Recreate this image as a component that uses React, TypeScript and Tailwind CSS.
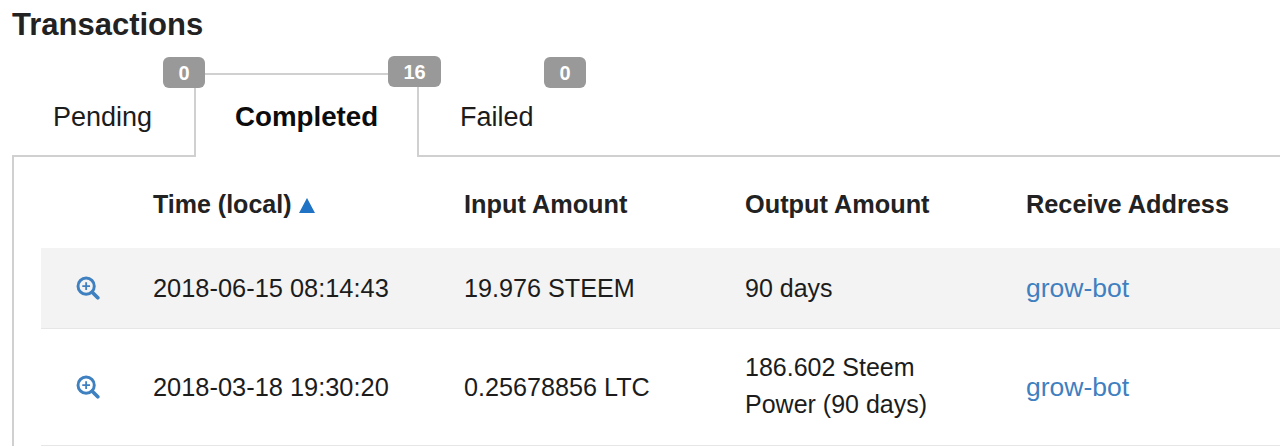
const font = "[font-family:'Liberation_Sans',Arial,sans-serif]";

function Badge({ children, className }: { children: React.ReactNode; className: string }) {
  return (
    <span className={`absolute z-10 flex h-[31px] items-center justify-center rounded-[6px] bg-[#999999] text-[20px] font-bold text-white ${className}`}>
      {children}
    </span>
  );
}

function Zoom() {
  return (
    <svg width="24" height="24" viewBox="0 0 26 26" fill="none" stroke="#3f80c0" className="block">
      <circle cx="11" cy="11" r="8.8" strokeWidth="3.2" />
      <path d="M17.6 17.6 L23.6 23.6" strokeWidth="4" strokeLinecap="round" />
      <path d="M11 6.8 V15.2 M6.8 11 H15.2" strokeWidth="2" />
    </svg>
  );
}

const cols = "grid grid-cols-[112px_311px_281px_281px_1fr] items-center";

function Row({ time, input, output, shaded, tall }: { time: string; input: string; output: React.ReactNode; shaded?: boolean; tall?: boolean }) {
  return (
    <div className={`${cols} ${shaded ? "h-[81px] bg-[#f3f3f3]" : ""} ${tall ? "h-[117px]" : ""} border-b border-[#e6e6e6]`}>
      <div className="pl-[35px]"><Zoom /></div>
      <div className="pt-[1px] text-[25.4px]">{time}</div>
      <div className="pt-[1px]">{input}</div>
      <div className={`text-[25px] leading-[37px] ${tall ? "pb-[2px]" : ""}`}>{output}</div>
      <div className="pt-[1px] text-[26.5px] text-[#3f80c0]">grow-bot</div>
    </div>
  );
}

export default function App() {
  return (
    <div className={`${font} h-[447px] w-[1280px] overflow-hidden bg-white text-[25.2px] text-[#1c1c1c]`}>
      <h1 className="pl-[12px] pt-[8px] text-[31px] font-bold leading-[33px] text-[#222222]">Transactions</h1>
      <div className="mt-[32px] flex h-[84px] pl-[12px]">
        <div className="relative flex w-[182px] items-end border-b-2 border-[#d0d0d0] pb-[22px] pl-[41px]">
          <span className="text-[27px] leading-[32px]">Pending</span>
          <Badge className="left-[151px] top-[-16px] w-[42px]">0</Badge>
        </div>
        <div className="relative flex w-[225px] items-end border-x-2 border-t-2 border-[#d0d0d0] pb-[24px] pl-[39px]">
          <span className="text-[27.7px] font-bold leading-[32px] text-[#0c0c0c]">Completed</span>
          <Badge className="left-[192px] top-[-19px] w-[53px]">16</Badge>
        </div>
        <div className="relative flex flex-1 items-end border-b-2 border-[#d0d0d0] pb-[22px] pl-[41px]">
          <span className="text-[27px] leading-[32px]">Failed</span>
          <Badge className="left-[125px] top-[-16px] w-[42px]">0</Badge>
        </div>
      </div>
      <div className="ml-[12px] border-l-2 border-[#d0d0d0] pl-[27px]">
        <div className={`${cols} h-[91px] pt-[4px] text-[25.3px] font-bold text-[#222222]`}>
          <div />
          <div className="flex items-center gap-[8px] text-[25px]">
            Time (local)
            <svg width="16" height="15" viewBox="0 0 16 15" className="mt-[2px]"><path d="M8 0 L16 15 H0 Z" fill="#1f72c4" /></svg>
          </div>
          <div>Input Amount</div>
          <div>Output Amount</div>
          <div>Receive Address</div>
        </div>
        <Row time="2018-06-15 08:14:43" input="19.976 STEEM" output="90 days" shaded />
        <Row time="2018-03-18 19:30:20" input="0.25678856 LTC" output={<>186.602 Steem<br />Power (90 days)</>} tall />
      </div>
    </div>
  );
}
